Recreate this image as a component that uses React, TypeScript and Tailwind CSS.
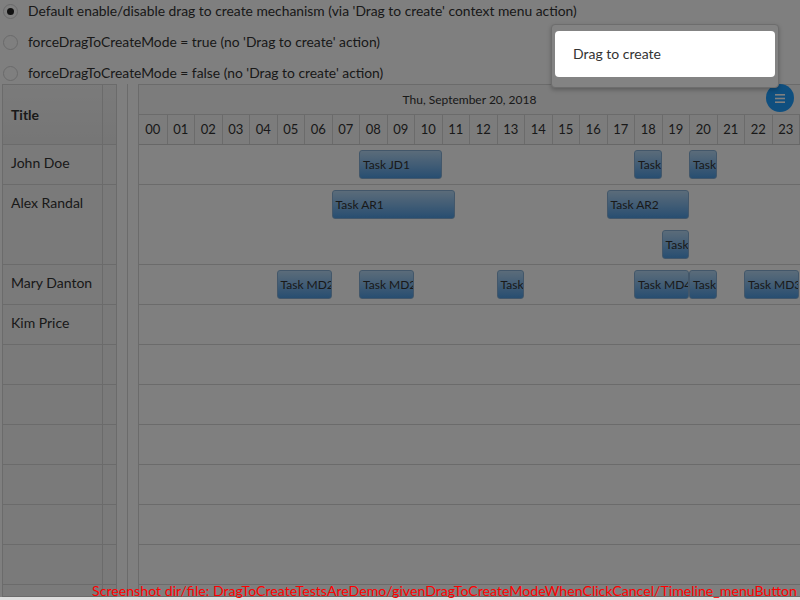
import React from 'react';

type Task = { title: string; start: number; end: number; lane?: number };
type Row = { name: string; lanes: number; tasks: Task[] };

const HOUR = 27.5;

const rows: Row[] = [
  {
    name: 'John Doe',
    lanes: 1,
    tasks: [
      { title: 'Task JD1', start: 8, end: 11 },
      { title: 'Task', start: 18, end: 19 },
      { title: 'Task', start: 20, end: 21 },
    ],
  },
  {
    name: 'Alex Randal',
    lanes: 2,
    tasks: [
      { title: 'Task AR1', start: 7, end: 11.5 },
      { title: 'Task AR2', start: 17, end: 20 },
      { title: 'Task', start: 19, end: 20, lane: 1 },
    ],
  },
  {
    name: 'Mary Danton',
    lanes: 1,
    tasks: [
      { title: 'Task MD2', start: 5, end: 7 },
      { title: 'Task MD2', start: 8, end: 10 },
      { title: 'Task', start: 13, end: 14 },
      { title: 'Task MD4', start: 18, end: 20 },
      { title: 'Task', start: 20, end: 21 },
      { title: 'Task MD3', start: 22, end: 24 },
    ],
  },
  { name: 'Kim Price', lanes: 1, tasks: [] },
  { name: '', lanes: 1, tasks: [] },
  { name: '', lanes: 1, tasks: [] },
  { name: '', lanes: 1, tasks: [] },
  { name: '', lanes: 1, tasks: [] },
  { name: '', lanes: 1, tasks: [] },
  { name: '', lanes: 1, tasks: [] },
];

const hours = Array.from({ length: 24 }, (_, i) => String(i).padStart(2, '0'));

const options = [
  { label: "Default enable/disable drag to create mechanism (via 'Drag to create' context menu action)", checked: true },
  { label: "forceDragToCreateMode = true (no 'Drag to create' action)", checked: false },
  { label: "forceDragToCreateMode = false (no 'Drag to create' action)", checked: false },
];

function Radio({ checked }: { checked: boolean }) {
  return (
    <span className="w-[15px] h-[15px] rounded-full border border-[#d4d4d5] bg-white flex items-center justify-center shrink-0">
      {checked && <span className="w-[7px] h-[7px] rounded-full bg-[#222]" />}
    </span>
  );
}

export default function App() {
  return (
    <div className="relative w-[800px] h-[600px] overflow-hidden bg-white font-['Lato',sans-serif] text-[#333]">
      {/* option radios */}
      <div className="h-[84px] flex flex-col gap-[10px] pl-[3px] pt-[1px]">
        {options.map((o, i) => (
          <label key={i} className="h-[21px] flex items-center gap-[10px] text-[13.85px]">
            <Radio checked={o.checked} />
            <span>{o.label}</span>
          </label>
        ))}
      </div>

      {/* timeline table */}
      <div className="flex pl-[2px] h-[513px]">
        <div className="w-[101px] border-l border-t border-[#d6d6d6] bg-[#f4f4f4]">
          <div className="h-[60px] border-b border-[#d6d6d6] bg-gradient-to-b from-[#f6f6f6] to-[#ececec] flex items-center pl-[8px] text-[14px] font-bold">
            Title
          </div>
          {rows.map((r, i) => (
            <div key={i} className="border-b border-[#d6d6d6] pl-[8px] pt-[8px] text-[14px] leading-[20px]" style={{ height: r.lanes * 40 }}>
              {r.name}
            </div>
          ))}
          <div className="h-[12px] border-b border-[#d6d6d6]" />
        </div>
        <div className="w-[15px] border-l border-t border-r border-[#d6d6d6] bg-[#f4f4f4]">
          <div className="h-[60px] border-b border-[#d6d6d6] bg-gradient-to-b from-[#f6f6f6] to-[#ececec]" />
          {rows.map((r, i) => (
            <div key={i} className="border-b border-[#d6d6d6]" style={{ height: r.lanes * 40 }} />
          ))}
          <div className="h-[12px] border-b border-[#d6d6d6]" />
        </div>
        <div className="w-[11px] border-r border-[#d6d6d6]" />
        <div className="w-[11px] border-r border-[#d6d6d6]" />

        <div className="flex-1 border-t border-[#d6d6d6]">
          <div className="h-[60px] border-b border-[#cfcfcf] bg-[#f8f8f8]">
            <div className="h-[30px] border-b border-[#d6d6d6] flex items-center justify-center text-[12px]">
              Thu, September 20, 2018
            </div>
            <div className="h-[29px] grid grid-cols-[28.5px_repeat(23,27.5px)]">
              {hours.map((h) => (
                <div key={h} className="border-r border-[#d6d6d6] flex items-center justify-center text-[13px]">
                  {h}
                </div>
              ))}
            </div>
          </div>
          {rows.map((r, i) => (
            <div key={i} className="relative border-b border-[#d6d6d6]" style={{ height: r.lanes * 40 }}>
              {r.tasks.map((t, j) => (
                <div
                  key={j}
                  className="absolute h-[29px] rounded-[3px] border border-[#86afd4] bg-gradient-to-b from-[#b6d8f4] to-[#4f9ce2] text-[12px] leading-[27px] pl-[3px] whitespace-nowrap overflow-hidden"
                  style={{ left: HOUR * t.start, width: HOUR * (t.end - t.start), top: 5 + (t.lane ?? 0) * 40 }}
                >
                  {t.title}
                </div>
              ))}
            </div>
          ))}
          <div className="h-[12px] border-b border-[#d6d6d6]" />
        </div>
      </div>

      {/* timeline menu button */}
      <button className="absolute left-[766px] top-[84px] w-[28px] h-[28px] rounded-full bg-[#1e9eff] flex items-center justify-center">
        <svg width="10" height="9" viewBox="0 0 10 9">
          <rect x="0" y="0" width="10" height="1.6" fill="white" />
          <rect x="0" y="3.7" width="10" height="1.6" fill="white" />
          <rect x="0" y="7.4" width="10" height="1.6" fill="white" />
        </svg>
      </button>

      {/* dimmer */}
      <div className="absolute inset-0 bg-black/50" />

      {/* popup menu */}
      <div className="absolute left-[551px] top-[24px] w-[228px] h-[64px] rounded-[4px] border border-[#6d6d6d] bg-[#838383] shadow-[0_2px_4px_rgba(0,0,0,0.25)] pt-[6px] px-[3px]">
        <div className="h-[46px] rounded-[4px] bg-white flex items-center pl-[18px] pb-[1px] text-[14px] text-[#333]">
          Drag to create
        </div>
      </div>

      <div className="absolute left-0 right-0 bottom-0 h-[3px] bg-[#dedede]" />

      <div className="absolute right-[3px] bottom-[1px] text-[14.15px] leading-[16px] text-[#ff0000] whitespace-nowrap">
        Screenshot dir/file: DragToCreateTestsAreDemo/givenDragToCreateModeWhenClickCancel/Timeline_menuButton
      </div>
    </div>
  );
}
